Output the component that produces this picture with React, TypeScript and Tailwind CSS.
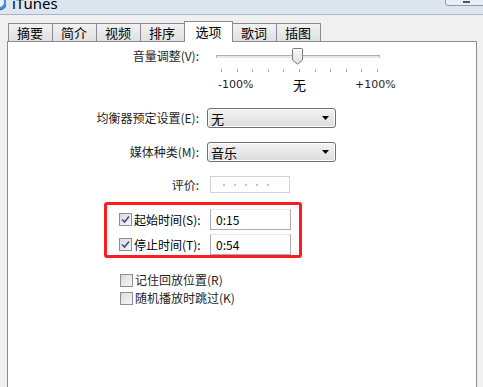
import React from "react";

const tabs = ["摘要", "简介", "视频", "排序", "选项", "歌词", "插图"];

const Checkbox: React.FC<{ checked?: boolean }> = ({ checked }) => (
  <span className="relative inline-flex h-[13px] w-[13px] shrink-0 items-center justify-center border border-[#8e8f8f] bg-gradient-to-br from-[#dcdcdc] to-[#f6f6f6]">
    {checked && (
      <svg width="9" height="9" viewBox="0 0 9 9">
        <path d="M1 4.5 L3.5 7 L8 1.5" fill="none" stroke="#3c4f8c" strokeWidth="1.6" />
      </svg>
    )}
  </span>
);

const Select: React.FC<{ value: string }> = ({ value }) => (
  <div className="flex h-[20px] w-[129px] items-center justify-between rounded-[3px] border border-[#707070] bg-gradient-to-b from-[#f3f3f3] to-[#dcdcdc] pl-[3px] pr-[6px] shadow-[inset_0_0_0_1px_#fcfcfc]">
    <span className="text-[13px] leading-none text-black">{value}</span>
    <svg width="7" height="4" viewBox="0 0 7 4">
      <path d="M0 0 H7 L3.5 4 Z" fill="#000" />
    </svg>
  </div>
);

const TimeInput: React.FC<{ value: string }> = ({ value }) => (
  <div className="flex h-[21px] w-[81px] items-center border border-[#abadb3] border-t-[#e3e9ef] bg-white pl-[5px] text-[12px] text-black">
    {value}
  </div>
);

export default function App() {
  return (
    <div
      className="flex h-[387px] w-[483px] flex-col overflow-hidden bg-[#f0f0f0] text-[12px] text-[#1e1e1e]"
      style={{ fontFamily: '"Noto Sans CJK SC", "Noto Sans", sans-serif' }}
    >
      {/* title bar */}
      <div className="flex h-[15px] shrink-0 items-start justify-between border-b border-[#a9b6c5] bg-[#dde6f0]">
        <div className="flex items-start gap-[6px]">
          <svg width="14" height="11" viewBox="0 0 14 11" className="-ml-[8px]">
            <circle cx="7" cy="2" r="8" fill="#4a8fd6" stroke="#2a5d9c" />
            <circle cx="7" cy="2" r="5" fill="#eaf4ff" />
          </svg>
          <span
            className="-mt-[7px] text-[15px] leading-[20px] text-black"
            style={{ fontFamily: '"Noto Sans", sans-serif' }}
          >
            iTunes
          </span>
        </div>
        <div className="-mt-[4px] mr-[-4px] flex h-[10px] w-[42px] items-end justify-center rounded-[3px] border border-[#8d99a8] bg-[#e8eef5] pb-[2px]">
          <span className="h-[2px] w-[7px] bg-[#555]" />
        </div>
      </div>

      {/* tabs */}
      <div className="mt-[6px] flex items-end pl-[8px]">
        {tabs.map((t) =>
          t === "选项" ? (
            <div
              key={t}
              className="relative z-10 -mb-px -ml-px flex h-[21px] w-[49px] items-start justify-center border border-b-0 border-[#898c95] bg-white pt-[2px] text-[13px] leading-[16px] text-black"
            >
              {t}
            </div>
          ) : (
            <div
              key={t}
              className="-ml-px flex h-[18px] w-[45px] items-center justify-start border border-b-0 border-[#898c95] bg-gradient-to-b from-[#f2f2f2] to-[#e0e0e0] pl-[8px] text-[13px] leading-none text-black first:ml-0"
            >
              {t}
            </div>
          )
        )}
      </div>

      {/* panel */}
      <div className="ml-[7px] mr-[6px] flex flex-1 flex-col border border-b-0 border-[#898c95] bg-white">
        {/* volume */}
        <div className="mt-[6px] flex h-[16px] items-center">
          <div className="w-[191px] text-right">音量调整(V):</div>
          <div className="relative ml-[17px] flex h-[16px] w-[164px] items-center">
            <div className="h-[3px] w-full border border-[#b0b0b0] border-b-[#e7e7e7] bg-[#e7eaea]" />
            <svg width="11" height="17" viewBox="0 0 11 17" className="absolute left-[76px] top-0">
              <defs>
                <linearGradient id="th" x1="0" x2="0" y1="0" y2="1">
                  <stop offset="0" stopColor="#fbfbfb" />
                  <stop offset="1" stopColor="#dcdcdc" />
                </linearGradient>
              </defs>
              <path d="M1.5 0.5 H9.5 Q10.5 0.5 10.5 1.5 V12 L5.5 16.3 L0.5 12 V1.5 Q0.5 0.5 1.5 0.5 Z" fill="url(#th)" stroke="#7a7a7a" />
            </svg>
          </div>
        </div>
        <div className="ml-[213px] mt-[5px] flex h-[3px] w-[157px] justify-between">
          {Array.from({ length: 11 }).map((_, i) => (
            <span key={i} className="h-[3px] w-px bg-[#a8a8a8]" />
          ))}
        </div>
        <div
          className="ml-[210px] mt-[6px] flex h-[14px] items-center text-[11px]"
          style={{ fontFamily: '"DejaVu Sans", sans-serif' }}
        >
          <span className="w-[75px]">-100%</span>
          <span
            className="w-[62px] text-[13px] text-black"
            style={{ fontFamily: '"Noto Sans CJK SC", sans-serif' }}
          >
            无
          </span>
          <span>+100%</span>
        </div>

        {/* equalizer */}
        <div className="mt-[16px] flex h-[20px] items-center">
          <div className="w-[191px] text-right">均衡器预定设置(E):</div>
          <div className="ml-[8px]">
            <Select value="无" />
          </div>
        </div>
        <div className="mt-[14px] flex h-[20px] items-center">
          <div className="w-[191px] text-right">媒体种类(M):</div>
          <div className="ml-[8px]">
            <Select value="音乐" />
          </div>
        </div>
        <div className="mt-[14px] flex h-[17px] items-center">
          <div className="w-[191px] text-right">评价:</div>
          <div className="ml-[11px] flex h-[17px] w-[80px] items-center gap-[9px] border border-[#c9d4e0] bg-white pl-[12px]">
            {Array.from({ length: 5 }).map((_, i) => (
              <span key={i} className="h-[2px] w-[2px] rounded-full bg-[#b5b5b5]" />
            ))}
          </div>
        </div>

        {/* start / stop time */}
        <div className="ml-[96px] mt-[9px] flex w-[198px] flex-col gap-[4px] rounded-[3px] border-[3px] border-[#ff1c1c] pb-0 pl-[12px] pr-[8px] pt-[4px]">
          {[
            ["起始时间(S):", "0:15"],
            ["停止时间(T):", "0:54"],
          ].map(([label, v]) => (
            <div key={label} className="flex h-[21px] items-center">
              <Checkbox checked />
              <span className="ml-[2px] w-[76px] whitespace-nowrap text-[12px] text-black">{label}</span>
              <TimeInput value={v} />
            </div>
          ))}
        </div>

        {/* options */}
        <div className="ml-[112px] mt-[13px] flex flex-col">
          <div className="flex h-[18px] items-center">
            <Checkbox />
            <span className="ml-[2px] text-[12px]">记住回放位置(R)</span>
          </div>
          <div className="flex h-[18px] items-center">
            <Checkbox />
            <span className="ml-[2px] text-[12px]">随机播放时跳过(K)</span>
          </div>
        </div>
      </div>
    </div>
  );
}
